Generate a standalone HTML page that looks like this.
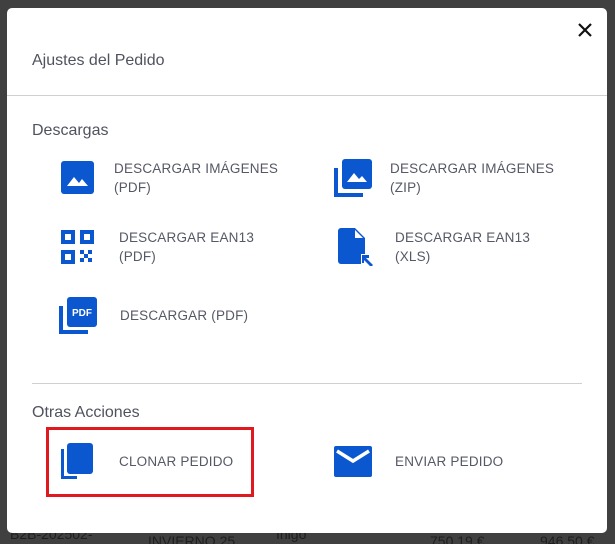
<!DOCTYPE html>
<html style="overflow:hidden;height:544px"><head><meta charset="utf-8"><style>
body{margin:0;width:615px;height:544px;background:#404040;position:relative;overflow:hidden;font-family:"Liberation Sans",sans-serif}
.bg{position:absolute;color:#1e1e1e;font-size:14px;top:526px;line-height:16px}
.m{position:absolute;left:7px;top:8px;width:600px;height:525px;background:#fff;border-radius:5px}
.t{position:absolute;color:#50535f;font-size:16px}
.l{position:absolute;color:#555865;font-size:13.5px;line-height:19px;letter-spacing:.2px}
svg{position:absolute}
</style></head><body>
<div class="bg" style="left:10px">B2B-202502-</div>
<div class="bg" style="left:148px;top:533px">INVIERNO 25</div>
<div class="bg" style="left:276px">Iñigo</div>
<div class="bg" style="left:430px;top:533px">750,19 €</div>
<div class="bg" style="left:540px;top:533px">946,50 €</div>
<div class="m"></div>
<svg style="left:577px;top:22px" width="16" height="16" viewBox="0 0 16 16"><path d="M2 2L14 14M14 2L2 14" stroke="#111" stroke-width="2.2"/></svg>
<div class="t" style="left:32px;top:52px">Ajustes del Pedido</div>
<div style="position:absolute;left:7px;top:95px;width:600px;height:1px;background:#d0d0d0"></div>
<div class="t" style="left:32px;top:122px">Descargas</div>

<svg style="left:61px;top:161px" width="33" height="33" viewBox="0 0 33 33"><rect width="33" height="33" rx="3" fill="#0b57d0"/><path d="M6 25L13 16L18 22L21 18L27 25Z" fill="#fff"/></svg>
<div class="l" style="left:114px;top:159px">DESCARGAR IMÁGENES<br>(PDF)</div>

<svg style="left:334px;top:159px" width="38" height="38" viewBox="0 0 38 38"><path d="M0 9V38H29V34H4V9Z" fill="#0b57d0"/><rect x="8" y="0" width="30" height="30" rx="3" fill="#0b57d0"/><path d="M13 23L20 14L25 20L28 17L33 23Z" fill="#fff"/></svg>
<div class="l" style="left:390px;top:159px">DESCARGAR IMÁGENES<br>(ZIP)</div>

<svg style="left:61px;top:230px" width="33" height="34" viewBox="0 0 33 34"><g fill="none" stroke="#0b57d0" stroke-width="4"><rect x="2" y="2" width="10" height="10"/><rect x="21" y="2" width="10" height="10"/><rect x="2" y="22" width="10" height="10"/></g><g fill="#0b57d0"><rect x="19" y="20" width="4" height="4"/><rect x="27" y="20" width="4" height="4"/><rect x="23" y="24" width="4" height="4"/><rect x="19" y="28" width="4" height="4"/><rect x="27" y="28" width="4" height="4"/></g></svg>
<div class="l" style="left:119px;top:228px">DESCARGAR EAN13<br>(PDF)</div>

<svg style="left:338px;top:228px" width="36" height="38" viewBox="0 0 36 38"><path d="M3 0H17L27 10V36H3A3 3 0 0 1 0 33V3A3 3 0 0 1 3 0Z" fill="#0b57d0"/><path d="M17 2V10H25Z" fill="#fff"/><path d="M23 26H34V36H23Z" fill="#fff"/><path d="M24 27H31V30H28L35 37 33 39 26 32V35H24Z" fill="#0b57d0"/></svg>
<div class="l" style="left:395px;top:228px">DESCARGAR EAN13<br>(XLS)</div>

<svg style="left:59px;top:297px" width="38" height="38" viewBox="0 0 38 38"><path d="M0 9V37H29V33H4V9Z" fill="#0b57d0"/><rect x="8" y="0" width="30" height="30" rx="3" fill="#0b57d0"/><text x="23" y="19" font-size="10" font-weight="bold" fill="#fff" text-anchor="middle" font-family="Liberation Sans,sans-serif">PDF</text></svg>
<div class="l" style="left:120px;top:306px">DESCARGAR (PDF)</div>

<div style="position:absolute;left:32px;top:383px;width:550px;height:1px;background:#d0d0d0"></div>
<div class="t" style="left:32px;top:404px">Otras Acciones</div>

<div style="position:absolute;left:46px;top:427px;border:3px solid #e0191f;box-sizing:border-box;width:208px;height:70px"></div>
<svg style="left:61px;top:443px" width="32" height="37" viewBox="0 0 32 37"><path d="M0 6V36H16V33H3V6Z" fill="#0b57d0"/><rect x="6" y="0" width="26" height="31" rx="3" fill="#0b57d0"/></svg>
<div class="l" style="left:119px;top:452px">CLONAR PEDIDO</div>

<svg style="left:334px;top:446px" width="38" height="31" viewBox="0 0 38 31"><rect width="38" height="31" rx="2" fill="#0b57d0"/><path d="M3 5L19 15L35 5" fill="none" stroke="#fff" stroke-width="3.5"/></svg>
<div class="l" style="left:395px;top:452px">ENVIAR PEDIDO</div>
</body></html>
